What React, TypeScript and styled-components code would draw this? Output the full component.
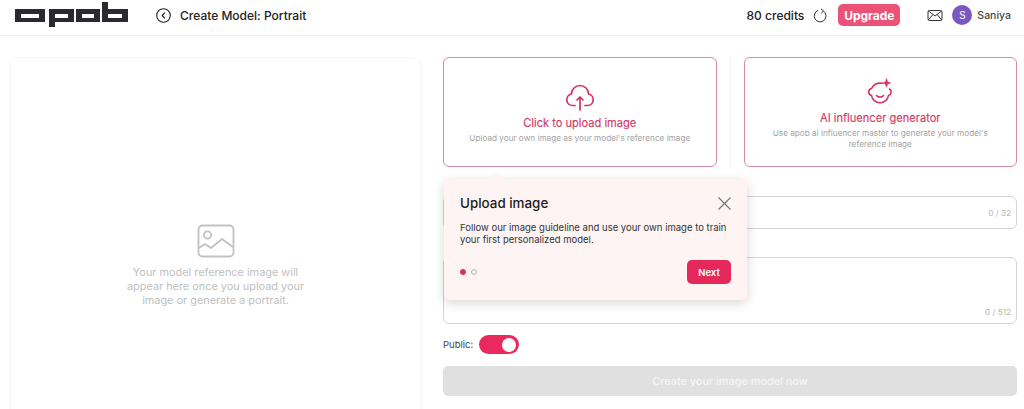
import React from "react";
import styled, { createGlobalStyle } from "styled-components";

const Global = createGlobalStyle`
  html, body { margin: 0; padding: 0; background: #fff; height: 409px; overflow: hidden; }
  body { font-family: Inter, "Liberation Sans", sans-serif; color: #222; }
  * { box-sizing: border-box; }
`;

const Page = styled.div`
  width: 1024px;
  height: 409px;
  overflow: hidden;
  display: flex;
  flex-direction: column;
`;

const Header = styled.header`
  height: 36px;
  flex: none;
  border-bottom: 1px solid #f0f0f0;
  display: flex;
  align-items: center;
  padding: 0 13px 5px 15px;
`;

const Logo = styled.svg`
  width: 113px;
  height: 27px;
  flex: none;
  margin-bottom: 3px;
`;

const BackIcon = styled.svg`
  width: 15px;
  height: 15px;
  margin-left: 28px;
  flex: none;
`;

const Title = styled.div`
  font-size: 12px;
  font-weight: 500;
  margin-left: 9px;
  color: #222;
`;

const HeaderRight = styled.div`
  margin-left: auto;
  display: flex;
  align-items: center;
`;

const Credits = styled.span`
  font-size: 12px;
  font-weight: 500;
  color: #222;
`;

const RefreshIcon = styled.svg`
  width: 15px;
  height: 15px;
  margin-left: 9px;
`;

const UpgradeButton = styled.button`
  margin-left: 10px;
  width: 62px;
  height: 22px;
  border: none;
  border-radius: 5px;
  background: #ec5277;
  color: #fff;
  font: 700 12px Inter, sans-serif;
  padding: 0;
`;

const MailIcon = styled.svg`
  width: 16px;
  height: 13px;
  margin-left: 27px;
`;

const Avatar = styled.div`
  width: 20px;
  height: 20px;
  border-radius: 50%;
  background: #7a58c0;
  color: #fff;
  font-size: 10px;
  display: flex;
  align-items: center;
  justify-content: center;
  margin-left: 9px;
`;

const UserName = styled.span`
  font-size: 10.5px;
  font-weight: 500;
  margin-left: 5px;
  color: #444;
`;

const Main = styled.main`
  flex: 1;
  display: flex;
  padding: 21px 7px 0 10px;
  gap: 22px;
  min-height: 0;
`;

const Preview = styled.section`
  width: 411px;
  height: 380px;
  flex: none;
  border: 1px solid #f5f5f5;
  border-radius: 8px;
  display: flex;
  flex-direction: column;
  align-items: center;
  padding-top: 166px;
`;

const PreviewIcon = styled.svg`
  width: 38px;
  height: 34px;
`;

const PreviewText = styled.p`
  width: 190px;
  margin: 7px 0 0;
  text-align: center;
  font-size: 10.9px;
  line-height: 14px;
  color: #c0c0c0;
`;

const Form = styled.section`
  flex: 1;
  display: flex;
  flex-direction: column;
  position: relative;
`;

const Cards = styled.div`
  display: flex;
  height: 110px;
  flex: none;
`;

const Divider = styled.div`
  width: 1px;
  background: #f3f3f3;
  margin: 0 13px;
`;

const Card = styled.div`
  flex: 1;
  border: 1px solid #d98aa6;
  border-radius: 6px;
  display: flex;
  flex-direction: column;
  align-items: center;
  justify-content: center;
  text-align: center;
  padding-top: 3px;
`;

const CardIcon = styled.svg`
  width: 30px;
  height: 28px;
`;

const CardTitle = styled.div`
  font-size: 11.1px;
  font-weight: 400;
  -webkit-text-stroke: 0.15px #d23a68;
  color: #d23a68;
  margin-top: 5px;
  line-height: 14px;
`;

const CardText = styled.div<{ $wide?: boolean }>`
  font-size: 8.2px;
  line-height: 11px;
  color: #a3a3a3;
  margin-top: 3px;
  max-width: ${(p) => (p.$wide ? "260px" : "232px")};
`;

const Field = styled.div<{ $h: number; $mt: number; $end?: boolean }>`
  height: ${(p) => p.$h}px;
  margin-top: ${(p) => p.$mt}px;
  flex: none;
  border: 1px solid #d4d4d4;
  border-radius: 6px;
  display: flex;
  align-items: ${(p) => (p.$end ? "flex-end" : "center")};
  justify-content: flex-end;
  padding: 0 5px ${(p) => (p.$end ? "6px" : "0")} 0;
`;

const Counter = styled.span`
  font-size: 8.2px;
  line-height: 10px;
  color: #b5b5b5;
`;

const PublicRow = styled.div`
  display: flex;
  align-items: center;
  margin-top: 11px;
  height: 19px;
`;

const PublicLabel = styled.span`
  font-size: 9.5px;
  color: #444;
`;

const Toggle = styled.div`
  width: 40px;
  height: 19px;
  margin-left: 6px;
  border-radius: 10px;
  background: #ea2a5e;
  display: flex;
  align-items: center;
  justify-content: flex-end;
  padding-right: 3px;
`;

const Knob = styled.div`
  width: 14px;
  height: 14px;
  border-radius: 50%;
  background: #fff;
`;

const CreateButton = styled.button`
  margin-top: 12px;
  height: 30px;
  flex: none;
  border: none;
  border-radius: 5px;
  background: #e0e0e0;
  color: #f6f6f6;
  font: 500 10.9px Inter, sans-serif;
  padding: 0;
`;

const Popover = styled.div`
  position: absolute;
  left: 1px;
  top: 122px;
  width: 303px;
  height: 121px;
  background: #fef4f3;
  border-radius: 5px;
  box-shadow: 0 3px 12px rgba(0, 0, 0, 0.16);
  padding: 14px 16px 0 16px;
  display: flex;
  flex-direction: column;
  &::before {
    content: "";
    position: absolute;
    left: 48px;
    top: -5px;
    width: 10px;
    height: 10px;
    background: #fef4f3;
    transform: rotate(45deg);
  }
`;

const PopHead = styled.div`
  display: flex;
  justify-content: space-between;
  align-items: center;
  height: 20px;
`;

const PopTitle = styled.div`
  font-size: 13.4px;
  font-weight: 500;
  color: #1c1c1c;
`;

const CloseIcon = styled.svg`
  width: 13px;
  height: 13px;
`;

const PopText = styled.p`
  margin: 9px 0 0;
  font-size: 9.5px;
  line-height: 12px;
  color: #333;
`;

const PopFoot = styled.div`
  margin-top: 14px;
  display: flex;
  align-items: center;
  justify-content: space-between;
`;

const Dots = styled.div`
  display: flex;
  gap: 5px;
`;

const Dot = styled.span<{ $on?: boolean }>`
  width: 6px;
  height: 6px;
  border-radius: 50%;
  background: ${(p) => (p.$on ? "#d92f5f" : "transparent")};
  border: 1px solid ${(p) => (p.$on ? "#d92f5f" : "#b8b8b8")};
`;

const NextButton = styled.button`
  width: 44px;
  height: 24px;
  border: none;
  border-radius: 5px;
  background: #e4285a;
  color: #fff;
  font: 600 9.5px Inter, sans-serif;
  padding: 0;
`;

export default function App() {
  return (
    <Page>
      <Global />
      <Header>
        <Logo viewBox="0 0 113 27" fill="#2a2b2e">
          <path fillRule="evenodd" d="M0 9h30v13H0zM6 14v4h18v-4z" />
          <path fillRule="evenodd" d="M34 9h25v13H40v5h-6zM40 14v4h13v-4z" />
          <path fillRule="evenodd" d="M61 9h24v13H61zM67 14v4h12v-4z" />
          <path fillRule="evenodd" d="M87 2h6v7h20v13H87zM93 14v4h14v-4z" />
        </Logo>
        <BackIcon viewBox="0 0 15 15" fill="none" stroke="#222" strokeWidth="1.1">
          <circle cx="7.5" cy="7.5" r="6.8" />
          <path d="M8.6 5 6.2 7.5 8.6 10" strokeLinecap="round" strokeLinejoin="round" />
        </BackIcon>
        <Title>Create Model: Portrait</Title>
        <HeaderRight>
          <Credits>80 credits</Credits>
          <RefreshIcon viewBox="0 0 15 15" fill="none" stroke="#333" strokeWidth="1">
            <path d="M10.300 3A5.900 5.900 0 1 1 5.200 2.400" />
            <path d="M8 .8 10.500 3 8.200 5.300" />
          </RefreshIcon>
          <UpgradeButton>Upgrade</UpgradeButton>
          <MailIcon viewBox="0 0 16 13" fill="none" stroke="#333" strokeWidth="1">
            <rect x="1" y="1.5" width="14" height="10" rx="1.5" />
            <path d="m1.4 2 6.6 5 6.600-5M1.400 11l4.400-5.400M14.600 11l-4.400-5.400" />
          </MailIcon>
          <Avatar>S</Avatar>
          <UserName>Saniya</UserName>
        </HeaderRight>
      </Header>
      <Main>
        <Preview>
          <PreviewIcon viewBox="0 0 38 34" fill="none" stroke="#c2c2c2" strokeWidth="1.8">
            <rect x="1.5" y="1.5" width="35" height="31" rx="4" />
            <circle cx="10.5" cy="11" r="3.6" />
            <path d="M2 24l6-4 6 4 11-9 11 8" strokeLinejoin="round" />
          </PreviewIcon>
          <PreviewText>
            Your model reference image will appear here once you upload your image or generate a portrait.
          </PreviewText>
        </Preview>
        <Form>
          <Cards>
            <Card>
              <CardIcon viewBox="0 -1 30 28" fill="none" stroke="#d92f5f" strokeWidth="1.7" strokeLinecap="round" strokeLinejoin="round">
                <path d="M10 21.500H7.500A5.800 5.800 0 0 1 6.500 10A8.500 8.500 0 0 1 23.500 10A5.800 5.800 0 0 1 22.500 21.500H20" />
                <path d="M15 26V13M12 16l3-3 3 3" />
              </CardIcon>
              <CardTitle>Click to upload image</CardTitle>
              <CardText $wide>Upload your own image as your model's reference image</CardText>
            </Card>
            <Divider />
            <Card>
              <CardIcon viewBox="0 0 30 28" fill="none" stroke="#d92f5f" strokeWidth="1.6" strokeLinecap="round">
                <path d="M17 5.300A9.500 9.500 0 0 0 6.500 10.500a3.600 3.600 0 0 0 0 7A8.600 8.600 0 0 0 23.500 17.500a3.600 3.600 0 0 0 1-6.500" />
                <path d="M11.500 17.500a4.500 4.500 0 0 0 7 0" />
                <path d="M21.500.8l1.100 3.100 3.100 1.100-3.100 1.100-1.100 3.100-1.100-3.100-3.100-1.100 3.100-1.100z" fill="#d92f5f" strokeWidth="0.6" />
              </CardIcon>
              <CardTitle>AI influencer generator</CardTitle>
              <CardText>Use apob ai influencer master to generate your model's reference image</CardText>
            </Card>
          </Cards>
          <Field $h={33} $mt={29}>
            <Counter>0 / 32</Counter>
          </Field>
          <Field $h={67} $mt={28} $end>
            <Counter>0 / 512</Counter>
          </Field>
          <PublicRow>
            <PublicLabel>Public:</PublicLabel>
            <Toggle>
              <Knob />
            </Toggle>
          </PublicRow>
          <CreateButton>Create your image model now</CreateButton>
          <Popover>
            <PopHead>
              <PopTitle>Upload image</PopTitle>
              <CloseIcon viewBox="0 0 13 13" fill="none" stroke="#777" strokeWidth="1.2">
                <path d="M.5.5l12 12M12.500.5l-12 12" />
              </CloseIcon>
            </PopHead>
            <PopText>Follow our image guideline and use your own image to train your first personalized model.</PopText>
            <PopFoot>
              <Dots>
                <Dot $on />
                <Dot />
              </Dots>
              <NextButton>Next</NextButton>
            </PopFoot>
          </Popover>
        </Form>
      </Main>
    </Page>
  );
}
